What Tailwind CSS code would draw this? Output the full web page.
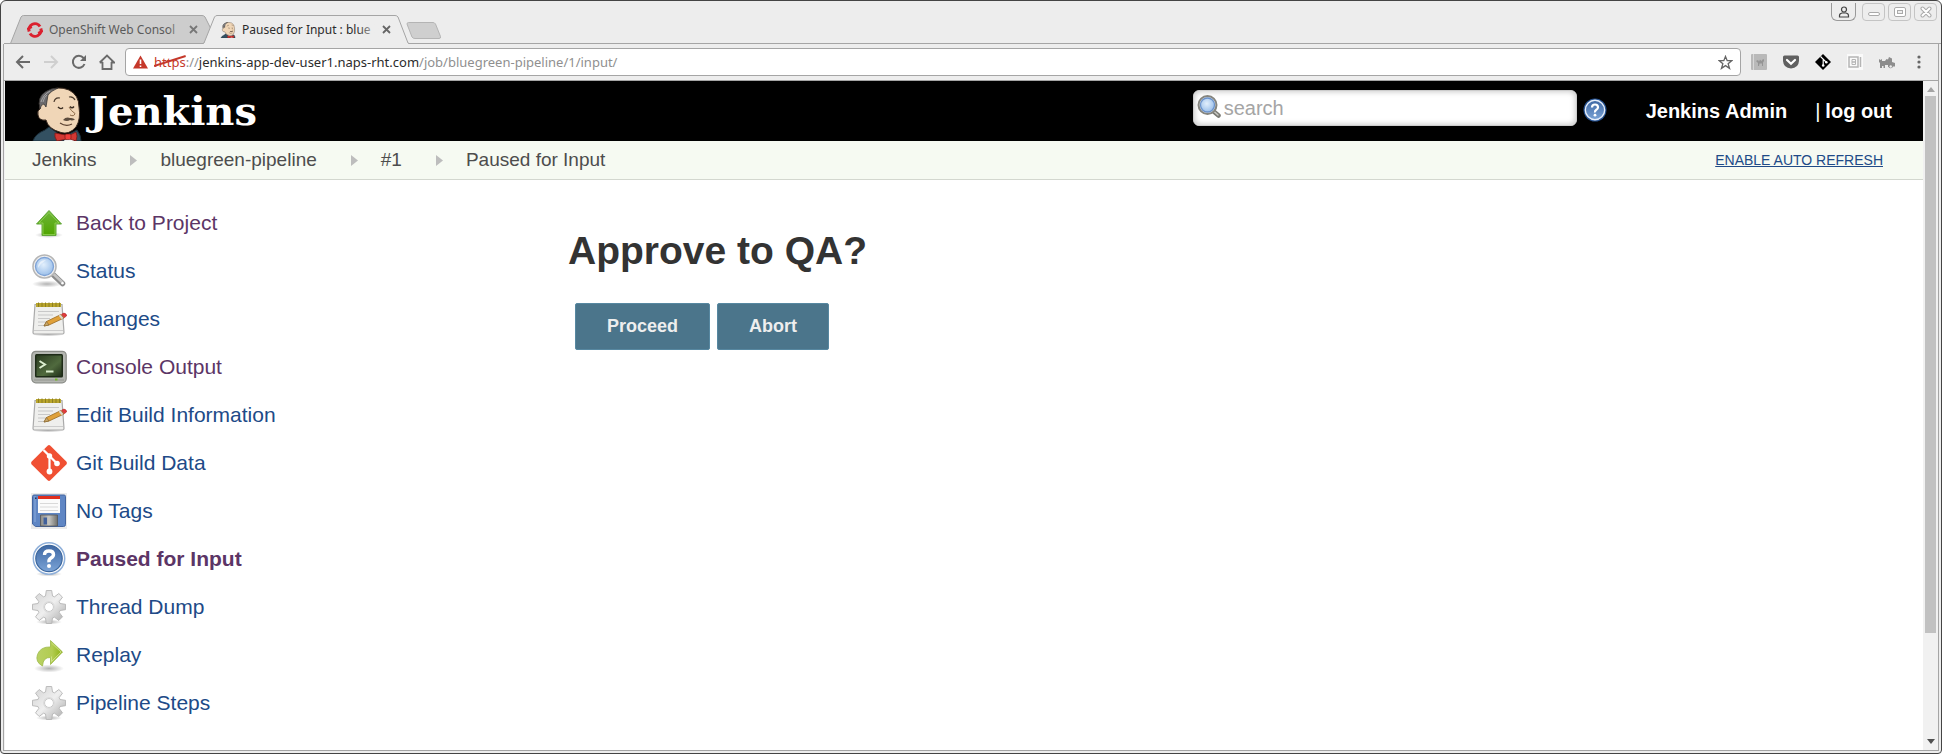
<!DOCTYPE html>
<html lang="en">
<head>
<meta charset="utf-8">
<title>Paused for Input : bluegreen-pipeline</title>
<script src="https://cdn.jsdelivr.net/npm/@tailwindcss/browser@4"></script>
</head>
<body class="flex h-screen flex-col overflow-hidden bg-white">
<svg class="absolute h-0 w-0" aria-hidden="true">
  <defs>
    <linearGradient id="green" x1="0" y1="0" x2="0" y2="1"><stop offset="0" stop-color="#6fb53a"/><stop offset="1" stop-color="#4fa500"/></linearGradient>
    <radialGradient id="glass" cx=".45" cy=".4" r=".6"><stop offset="0" stop-color="#e2effc"/><stop offset="1" stop-color="#9cc0ea"/></radialGradient>
    <linearGradient id="gear-fill" x1="0" y1="0" x2="1" y2="1"><stop offset="0" stop-color="#d2d2d2"/><stop offset=".5" stop-color="#efefef"/><stop offset="1" stop-color="#a8a8a8"/></linearGradient>
    <linearGradient id="screen" x1="0" y1="0" x2="1" y2="1"><stop offset="0" stop-color="#2a3b20"/><stop offset=".6" stop-color="#506a3e"/><stop offset="1" stop-color="#22311a"/></linearGradient>
    <linearGradient id="blue" x1="0" y1="0" x2="0" y2="1"><stop offset="0" stop-color="#3e68a4"/><stop offset="1" stop-color="#7ba3d6"/></linearGradient>
    <linearGradient id="metal" x1="0" y1="0" x2="1" y2="0"><stop offset="0" stop-color="#8b8b87"/><stop offset=".5" stop-color="#c6c6c2"/><stop offset="1" stop-color="#6f6f6b"/></linearGradient>
    <linearGradient id="lime" x1="0" y1="0" x2="1" y2="0"><stop offset="0" stop-color="#b9d164"/><stop offset=".6" stop-color="#b2cc50"/><stop offset="1" stop-color="#8cb010"/></linearGradient>
    <radialGradient id="shade"><stop offset="0" stop-color="#000" stop-opacity=".3"/><stop offset="1" stop-color="#000" stop-opacity="0"/></radialGradient>
  </defs>
  <symbol id="i-up" viewBox="0 0 36 36">
    <ellipse cx="18" cy="30" rx="14" ry="3" fill="url(#shade)"/>
    <path d="M18 5.500L30.500 19H25V30.500H11V19H5.500Z" fill="url(#green)" stroke="#62a63a"/>
    <path d="M18 7.500L28 18H24V29.500H12V18H8Z" fill="none" stroke="#a6e070" stroke-opacity=".6"/>
  </symbol>
  <symbol id="i-search" viewBox="0 0 36 36">
    <ellipse cx="16" cy="31" rx="15" ry="3.500" fill="url(#shade)"/>
    <path d="M22 21.500L31.500 30.500" stroke="#8c8c8c" stroke-width="5.500" stroke-linecap="round"/>
    <path d="M23 21.500L31.500 29.500" stroke="#c4c4c4" stroke-width="2.500" stroke-linecap="round"/>
    <circle cx="31.500" cy="30.300" r="1.200" fill="#fff"/>
    <circle cx="13.500" cy="13.500" r="11.500" fill="#eee" stroke="#b5b5b5" stroke-width="1.500"/>
    <circle cx="13.500" cy="13.500" r="9" fill="url(#glass)" stroke="#7da2d6" stroke-width="1.300"/>
    <path d="M7 15Q7 7 15 7Q10 10 7 15Z" fill="#fff" fill-opacity=".55"/>
  </symbol>
  <symbol id="i-search-dark" viewBox="0 0 24 24">
    <path d="M15.500 15.500L21.500 20.500" stroke="#7a7a74" stroke-width="4.500" stroke-linecap="round"/>
    <path d="M16 15.500L21 20" stroke="#c9c9c4" stroke-width="1.500" stroke-linecap="round"/>
    <circle cx="10.500" cy="10" r="9" fill="#ddd" stroke="#85857f" stroke-width="2"/>
    <circle cx="10.500" cy="10" r="7" fill="url(#glass)" stroke="#6b93cc" stroke-width="1.300"/>
  </symbol>
  <symbol id="i-notepad" viewBox="0 0 36 36">
    <ellipse cx="17" cy="33.500" rx="16" ry="2" fill="url(#shade)"/>
    <path d="M4 3.500H31L33 31.500Q33 33 31.500 33H3.500Q2 33 2 31.500Z" fill="#efefed" stroke="#aaa" stroke-width="1.200"/>
    <path d="M3 29.500H32" stroke="#ccc"/>
    <path d="M5 2H30V6H5Z" fill="#b9a52c"/>
    <path d="M7.500 1.500V6M11 1.500V6M14.500 1.500V6M18 1.500V6M21.500 1.500V6M25 1.500V6M28.500 1.500V6" stroke="#8d7f22" stroke-width="1"/>
    <path d="M7 10.500H28M7 14H22M7 17.500H19M7 21H15M7 24.500H14" stroke="#c8c8c8" stroke-width="1.200"/>
    <path d="M13 25L15.500 20.500L30 13.500L33 17L18 24Z" fill="#e0a13a" stroke="#9a6b22" stroke-width=".8"/>
    <path d="M13 25L15.500 20.500L18 24Z" fill="#c9a76a" stroke="#775a2a" stroke-width=".5"/>
    <path d="M28.500 14.200L31.500 17.700" stroke="#d8d8d8" stroke-width="2"/>
    <path d="M30.500 13.300Q33 11 35 13T33.300 16.700Z" fill="#e23b3b" stroke="#a93030" stroke-width=".5"/>
  </symbol>
  <symbol id="i-console" viewBox="0 0 36 36">
    <rect x=".8" y="2.300" width="34.400" height="31.500" rx="4" fill="#b4b6b1" stroke="#8b8d88" stroke-width="1.200"/>
    <rect x="4" y="5" width="28" height="23.500" rx="1.500" fill="#1d2a17"/>
    <rect x="5.500" y="6.500" width="25" height="20.500" fill="url(#screen)"/>
    <path d="M8.500 12L14 15.500L8.500 19" fill="none" stroke="#dcefd0" stroke-width="2"/>
    <path d="M15 22.500H22.500" stroke="#dcefd0" stroke-width="2"/>
    <path d="M3 31H33" stroke="#93958f" stroke-width="1"/>
    <path d="M24 30.500H26.500" stroke="#76b82a" stroke-width="2"/>
  </symbol>
  <symbol id="i-git" viewBox="0 0 36 36">
    <path d="M16.600.7Q18 -.5 19.400.7L35.300 16.600Q36.500 18 35.300 19.400L19.400 35.300Q18 36.500 16.600 35.300L.7 19.400Q-.5 18 .7 16.600Z" fill="#f05033"/>
    <path d="M12.500 5L18.500 11V26M19 11.500L26 18.500" fill="none" stroke="#fff" stroke-width="2.200"/>
    <circle cx="18.500" cy="11" r="2.700" fill="#fff"/><circle cx="26" cy="18.500" r="2.800" fill="#fff"/><circle cx="18.500" cy="26.500" r="2.900" fill="#fff"/>
  </symbol>
  <symbol id="i-floppy" viewBox="0 0 36 36">
    <path d="M0 0H36V36H0Z" fill="#ebebeb"/>
    <path d="M3 2H33Q34.500 2 34.500 3.500V31.500Q34.500 33.500 32.500 33.500H4.500L1.500 31V3.500Q1.500 2 3 2Z" fill="#5f86c4" stroke="#4365a0"/>
    <path d="M4 3V29" stroke="#8dacdc"/>
    <path d="M7 3.500H29V20H7Z" fill="#fbfbfb"/><path d="M7 3H29V6H7Z" fill="#e03020"/>
    <path d="M9 10.500H27M9 14H27M9 17.500H27" stroke="#d9d9d9"/>
    <path d="M9.500 22H26.500V33H9.500Z" fill="url(#metal)" stroke="#555" stroke-width=".8"/>
    <path d="M12.500 24.500H16V31.500H12.500Z" fill="#41609b"/>
    <path d="M4 4.500H5.500V6H4Z" fill="#22355a"/>
  </symbol>
  <symbol id="i-help" viewBox="0 0 36 36">
    <ellipse cx="18" cy="33" rx="13" ry="2.500" fill="url(#shade)"/>
    <circle cx="18" cy="17.500" r="15.700" fill="#fff" stroke="#8fb0da" stroke-width="1.500"/>
    <circle cx="18" cy="17.500" r="13.200" fill="url(#blue)" stroke="#3d689f" stroke-width="1.200"/>
    <path d="M13.500 14Q13.500 10 18 10T22.500 13.500Q22.500 15.500 20 17T18 21.300" fill="none" stroke="#fff" stroke-width="3.400"/>
    <circle cx="18" cy="25" r="2" fill="#fff"/>
  </symbol>
  <symbol id="i-help-dark" viewBox="0 0 24 24">
    <circle cx="12" cy="12" r="11.500" fill="#24508f"/>
    <circle cx="12" cy="12" r="9.700" fill="url(#blue)" stroke="#e6eefa" stroke-width="1.400"/>
    <path d="M9 9.500Q9 6.500 12 6.500T15 9.200Q15 10.800 13.300 11.800T12 14.500" fill="none" stroke="#fff" stroke-width="2.200"/>
    <circle cx="12" cy="17.200" r="1.400" fill="#fff"/>
  </symbol>
  <symbol id="i-gear" viewBox="0 0 36 36">
    <ellipse cx="18" cy="33" rx="13" ry="2.500" fill="url(#shade)"/>
    <g fill="url(#gear-fill)" stroke="#b5b5b5" stroke-width=".9" stroke-linejoin="round">
      <path fill-rule="evenodd" d="M14.500 7L15.300 1.500H20.700L21.500 7L23.500 7.800L27.800 4.500L31.500 8.200L28.200 12.500L29 14.500L34.500 15.300V20.700L29 21.500L28.200 23.500L31.500 27.800L27.800 31.500L23.500 28.200L21.500 29L20.700 34.500H15.300L14.500 29L12.500 28.200L8.200 31.500L4.500 27.800L7.800 23.500L7 21.500L1.500 20.700V15.300L7 14.500L7.800 12.500L4.500 8.200L8.200 4.500L12.500 7.800ZM18 13.500A4.500 4.500 0 1 0 18 22.500A4.500 4.500 0 1 0 18 13.500Z"/>
    </g>
    <circle cx="18" cy="18" r="5.200" fill="none" stroke="#dcdcdc" stroke-width="1.500"/>
  </symbol>
  <symbol id="i-replay" viewBox="0 0 36 36">
    <ellipse cx="18" cy="31.500" rx="15" ry="4" fill="url(#shade)"/>
    <path d="M19.500 3.500L31.500 15L19.500 27.500V20.500Q12 20 11.500 29Q4 25 6.500 17.500Q9.500 9.500 19.500 10Z" fill="url(#lime)" stroke="#a3bd52" stroke-width=".9"/>
    <path d="M20.500 6L30 15L20.500 24.500V19.500" fill="none" stroke="#d9e99a" stroke-opacity=".7"/>
  </symbol>
  <symbol id="i-butler" viewBox="0 0 48 54">
    <path d="M0 54Q2 47 12 43L16 40L30 50L44 43Q48 48 48 54Z" fill="#335061" stroke="#1b2e3a"/>
    <path d="M13 33Q6 34 5 28Q4 23 7 22Q4 10 13 5Q24 -2 36 3Q46 8 46 20Q48 32 43 40Q36 48 28 45.500Q15 42 13 33Z" fill="#f0d6b7" stroke="#3a2a20" stroke-width="1"/>
    <path d="M7 22Q4 10 12 5Q18 1 25 1Q18 4 15 8Q14 14 13 20L11 17Q8 17 7 22Z" fill="#6b6a6c" stroke="#2a2a2a" stroke-width=".7"/>
    <path d="M8 15Q10 8 17 4M10 15Q11 10 14 8" fill="none" stroke="#b3b2b4" stroke-width=".8"/>
    <path d="M21 15Q22 10 27 11M36 10Q40 9 42 13" fill="none" stroke="#4b3b2d" stroke-width="1.200"/>
    <path d="M25 20Q28 23 30 20.500M37 19.500Q39 22 41 19.500" fill="none" stroke="#3a2d22" stroke-width="1.400"/>
    <path d="M36 20Q38 24 42 26.500Q41 30 37 28" fill="none" stroke="#8d6a48" stroke-width="1"/>
    <path d="M30 33Q33 29.500 37 31Q40 30.500 42 32.500Q39 34 37 33Q34 35 30 33Z" fill="#5c4c3e"/>
    <path d="M27 36Q33 40 39 37" fill="none" stroke="#5a4030" stroke-width="1.200"/>
    <path d="M31 54L33 50H40L41 54Z" fill="#eee"/>
    <path d="M22 46L33 48L34 52L24 54Q21 50 22 46ZM43 45L37 48L37 52L43 54Q45 49 43 45Z" fill="#d33833" stroke="#7c1816" stroke-width=".8"/>
    <rect x="32" y="47" width="6" height="5.500" rx="1.500" fill="#ef3d3a" stroke="#7c1816" stroke-width=".7"/>
  </symbol>
  <symbol id="i-arrow" viewBox="0 0 7 11"><path d="M0 0L7 5.500L0 11Z" fill="#bdbdbd"/></symbol>
  <symbol id="i-x" viewBox="0 0 9 9"><path d="M1 1L8 8M8 1L1 8" stroke="currentColor" stroke-width="1.800"/></symbol>
</svg>

<div class="flex min-h-0 flex-1 flex-col rounded-t-md rounded-b-sm border border-[#444] bg-[#ededed] font-['Noto_Sans',sans-serif]">
  <!-- Tab strip -->
  <div class="flex h-[43px] shrink-0 justify-between">
    <div class="relative flex items-end pl-[9px]" role="tablist">
      <div class="absolute inset-x-0 bottom-0 ml-[3px] border-b border-[#a5a5a5]"></div>
      <div role="tab" aria-selected="false" class="relative flex h-[29px] w-[202px] items-center pr-[12px] pl-[17px] text-[#5b5b5b]">
        <svg class="absolute inset-0 h-full w-full" viewBox="0 0 202 29" fill="#cdcdcd" stroke="#a5a5a5"><path d="M.5 28.500L11 2Q12 .5 13.500 .5H192Q194 .5 195 2L201 14L194 28.500Z"/></svg>
        <svg class="relative mr-[6px] h-4 w-4" viewBox="0 0 16 16" fill="none" stroke="#db212f" stroke-width="3"><path d="M2.200 9.500A6 6 0 0 1 13 4.500M13.800 6.500A6 6 0 0 1 3 11.500"/><path d="M0 7L5 5M11 11L16 9" stroke-width="2"/></svg>
        <span class="relative w-[132px] text-[12px] whitespace-nowrap">OpenShift Web Consol</span>
        <div class="absolute right-[24px] h-4 w-5 bg-linear-to-r from-[#cdcdcd]/0 to-[#cdcdcd]"></div>
        <button aria-label="Close tab" class="absolute right-[14px] text-[#777]"><svg class="h-[9px] w-[9px]"><use href="#i-x"/></svg></button>
      </div>
      <div role="tab" aria-selected="true" class="relative -ml-[9px] flex h-[29px] w-[206px] items-center pl-[17px] text-[#2b2b2b]">
        <svg class="absolute inset-0 h-full w-full" viewBox="0 0 206 29"><path d="M0 29L1 28L11.500 2Q12.500 .5 14 .5H192Q194 .5 195 2L205 28L206 29Z" fill="#ededed"/><path d="M0 28.500L1 28L11.500 2Q12.500 .5 14 .5H192Q194 .5 195 2L205 28L206 28.500" fill="none" stroke="#a5a5a5"/></svg>
        <svg class="relative mr-[6px] h-4 w-4"><use href="#i-butler"/></svg>
        <span class="relative w-[134px] text-[12px] whitespace-nowrap">Paused for Input : blue</span>
        <div class="absolute right-[28px] h-4 w-6 bg-linear-to-r from-[#ededed]/0 to-[#ededed]"></div>
        <button aria-label="Close tab" class="absolute right-[18px] text-[#666]"><svg class="h-[9px] w-[9px]"><use href="#i-x"/></svg></button>
      </div>
      <button aria-label="New tab" class="mb-[5px] -ml-[3px] h-[17px] w-[36px]"><svg class="h-[17px] w-[36px]" viewBox="0 0 36 17"><path d="M2.500 .5H27Q28.500 .5 29.500 2L34.500 14.500Q35 16.500 33 16.500H9Q7 16.500 6 15L1 2Q1 .5 2.500 .5Z" fill="#cfcfcf" stroke="#b4b4b4"/></svg></button>
    </div>
    <div class="flex flex-1 items-start justify-end gap-[3px] border-b border-[#a5a5a5] pt-[2px] pr-[4px]">
      <button aria-label="Profile" class="mr-[3px] flex h-[18px] w-[25px] items-center justify-center rounded-b-md border border-t-0 border-[#999]"><svg class="h-3 w-3" viewBox="0 0 12 12" fill="none" stroke="#444" stroke-width="1.200"><circle cx="6" cy="3.500" r="2.500"/><path d="M1.500 11V9.500Q1.500 7.500 4 7H8Q10.500 7.500 10.500 9.500V11Z"/></svg></button>
      <button aria-label="Minimize" class="flex h-[18px] w-[23px] items-center justify-center rounded-sm border border-[#c4c4c4]"><svg class="h-3 w-3" viewBox="0 0 12 12"><rect x=".5" y="6.500" width="11" height="3" rx="1.500" fill="#fff" stroke="#aaa"/></svg></button>
      <button aria-label="Maximize" class="flex h-[18px] w-[23px] items-center justify-center rounded-sm border border-[#c4c4c4]"><svg class="h-3 w-3" viewBox="0 0 12 12" fill="#fff" stroke="#aaa"><rect x=".5" y="1.500" width="11" height="9" rx="1.500"/><rect x="3.500" y="4.500" width="5" height="3" fill="#ededed"/></svg></button>
      <button aria-label="Close" class="flex h-[18px] w-[23px] items-center justify-center rounded-sm border border-[#c4c4c4]"><svg class="h-3 w-3" viewBox="0 0 12 12" stroke-linecap="round"><path d="M2.500 2.500L9.500 9.500M9.500 2.500L2.500 9.500" stroke="#aaa" stroke-width="4"/><path d="M2.500 2.500L9.500 9.500M9.500 2.500L2.500 9.500" stroke="#fff" stroke-width="2"/></svg></button>
    </div>
  </div>

  <!-- Toolbar -->
  <div class="mx-[2px] flex h-[37px] shrink-0 items-center border-x border-b border-[#a5a5a5] px-[11px]">
    <div class="flex items-center gap-[12px] text-[#6a6a6a]">
      <button aria-label="Back"><svg class="h-4 w-4" viewBox="0 0 16 16" fill="none" stroke="currentColor" stroke-width="2"><path d="M15 8H2.500M8 2L2 8L8 14"/></svg></button>
      <button aria-label="Forward" class="text-[#cfcfcf]"><svg class="h-4 w-4" viewBox="0 0 16 16" fill="none" stroke="currentColor" stroke-width="2"><path d="M1 8H13.500M8 2L14 8L8 14"/></svg></button>
      <button aria-label="Reload"><svg class="h-4 w-4" viewBox="0 0 16 16" fill="none" stroke="currentColor" stroke-width="2"><path d="M13.500 10A6 6 0 1 1 12.500 4L14 5.500"/><path d="M15 1V7H9Z" fill="currentColor" stroke="none"/></svg></button>
      <button aria-label="Home"><svg class="h-4 w-4" viewBox="0 0 16 16" fill="none" stroke="currentColor" stroke-width="1.800"><path d="M3.500 8V15H12.500V8M.8 8.500L8 1.500L15.200 8.500H12"/><path d="M.8 8.500H4"/></svg></button>
    </div>
    <div class="ml-[10px] flex h-[28px] flex-1 items-center rounded-sm border border-[#a5a5a5] bg-white px-[7px]">
      <svg class="mr-[6px] h-[14px] w-[15px]" viewBox="0 0 15 14"><path d="M7.500 .5L15 13.500H0Z" fill="#c5382a"/><path d="M7.500 4.500V9M7.500 10.500V12" stroke="#fff" stroke-width="1.600"/></svg>
      <div role="textbox" aria-label="Address" contenteditable="true" spellcheck="false" class="flex-1 text-[13px] leading-5 whitespace-nowrap text-[#8f8f8f]"><span class="relative text-[#c5382a]">https<svg class="absolute top-0 left-0 h-full w-full" viewBox="0 0 32 18" preserveAspectRatio="none"><path d="M0 13L32 3" stroke="#c5382a" stroke-width="2"/></svg></span>://<span class="text-[#2b2b2b]">jenkins-app-dev-user1.naps-rht.com</span>/job/bluegreen-pipeline/1/input/</div>
      <button aria-label="Bookmark"><svg class="h-[15px] w-[15px]" viewBox="0 0 16 16" fill="none" stroke="#666" stroke-width="1.400"><path d="M8 1.500L9.800 6H14.800L10.800 9.200L12.300 14.200L8 11.300L3.700 14.200L5.200 9.200L1.200 6H6.200Z"/></svg></button>
    </div>
    <div class="ml-[10px] flex items-center gap-4">
      <button aria-label="Camel extension"><svg class="h-4 w-4" viewBox="0 0 16 16"><rect width="16" height="16" rx="1" fill="#b9b9b9"/><path d="M2.500 0V16" stroke="#d8d8d8"/><path d="M5 7L7 6L8 7.500L9 5.500L10.500 7L12 5L13 5.500V7L12 8.500V12H11V9.500H8.500L8 12H7V9Z" fill="#959595"/></svg></button>
      <button aria-label="Pocket"><svg class="h-4 w-4" viewBox="0 0 16 16"><path d="M1.500 1.500H14.500Q16 1.500 16 3V7Q15.500 14 8 14.500Q.5 14 0 7V3Q0 1.500 1.500 1.500Z" fill="#606060"/><path d="M4 6L8 9.800L12 6" fill="none" stroke="#fff" stroke-width="2.200" stroke-linecap="round"/></svg></button>
      <button aria-label="Git extension"><svg class="h-4 w-4" viewBox="0 0 16 16"><path d="M8 0L16 8L8 16L0 8Z" fill="#000"/><path d="M5.500 2.500L8.200 5.200V12M8.200 5.200L11.500 8.500" fill="none" stroke="#fff" stroke-width="1.200"/><circle cx="8.200" cy="11.500" r="1.300" fill="#fff"/><circle cx="11.300" cy="8.300" r="1.300" fill="#fff"/></svg></button>
      <button aria-label="Blocker extension"><svg class="h-4 w-4" viewBox="0 0 16 16" fill="none" stroke="#b5b5b5"><path d="M0 0H16V16H0Z" fill="#fafafa" stroke="none"/><rect x="2" y="3" width="9" height="10" stroke-width="1.500"/><path d="M5 5.500H8.500V8H5ZM5 8H8.500V10.500H5Z"/><path d="M13.500 3V13" stroke-width="1.500"/></svg></button>
      <button aria-label="Tractor extension"><svg class="h-4 w-4" viewBox="0 0 16 16" fill="#8d8d8d"><path d="M0 5L1.500 6L3 5V7H6L7.500 5L9 5.500L10 3L13 4.500V8L16 9V12.500H14A2.500 2.500 0 0 1 9.500 13H9V11H6V14H4.500V12H3V14H1V9L0 8Z"/><circle cx="11.700" cy="12.500" r="1.200" fill="#ededed"/></svg></button>
      <button aria-label="Menu"><svg class="h-4 w-4" viewBox="0 0 16 16" fill="#666"><circle cx="8" cy="3" r="1.600"/><circle cx="8" cy="8" r="1.600"/><circle cx="8" cy="13" r="1.600"/></svg></button>
    </div>
  </div>

  <!-- Page viewport -->
  <div class="mx-[2px] mb-[2px] flex min-h-0 flex-1 border-x border-b border-[#a5a5a5] bg-[#f1f1f1] pl-px font-['Liberation_Sans',Arial,sans-serif]">
    <div class="min-w-0 flex-1 overflow-hidden bg-white">
      <header class="flex h-[60px] items-center justify-between bg-black pr-[31px] pl-[27px] text-[20px] font-bold text-white">
        <a href="#" class="flex h-full items-end">
          <svg class="h-[54px] w-[50px]" preserveAspectRatio="none"><use href="#i-butler"/></svg>
          <span class="ml-[7px] pb-[6px] font-['DejaVu_Serif',serif] text-[40px] leading-[48px]">Jenkins</span>
        </a>
        <div class="flex items-center">
          <div class="relative mb-[6px]">
            <input type="text" aria-label="Search" placeholder="search" class="block h-[36px] w-[384px] rounded-md border border-[#ccc] bg-white pl-[30px] text-[20px] font-normal text-black shadow-[inset_0_0_6px_#bbb] placeholder:text-[#a5a5a5]">
            <svg class="absolute top-[5px] left-[4px] h-6 w-6"><use href="#i-search-dark"/></svg>
          </div>
          <a href="#" aria-label="Help" class="mb-[2px] ml-[6px]"><svg class="h-6 w-6"><use href="#i-help-dark"/></svg></a>
          <a href="#" class="ml-[39px]">Jenkins Admin</a>
          <span class="ml-[28px] font-normal">|</span>
          <a href="#" class="ml-[5px]">log out</a>
        </div>
      </header>
      <nav class="flex h-[39px] items-center border-b border-[#d3d7cf] bg-[#f6faf2] pr-[40px] pl-[27px] text-[19px] text-[#4d4d4d]">
        <a href="#">Jenkins</a>
        <svg class="mr-[23px] ml-[34px] h-[11px] w-[7px]"><use href="#i-arrow"/></svg>
        <a href="#">bluegreen-pipeline</a>
        <svg class="mr-[23px] ml-[34px] h-[11px] w-[7px]"><use href="#i-arrow"/></svg>
        <a href="#">#1</a>
        <svg class="mr-[23px] ml-[34px] h-[11px] w-[7px]"><use href="#i-arrow"/></svg>
        <a href="#">Paused for Input</a>
        <a href="#" class="ml-auto text-[14px] text-[#204a87] underline">ENABLE AUTO REFRESH</a>
      </nav>
      <div class="flex pt-[19px] pl-[26px]">
        <aside class="w-[537px] shrink-0 text-[21px] text-[#204a87]">
          <a href="#" class="flex h-12 items-center gap-[9px] text-[#5c3566]"><svg class="h-9 w-9"><use href="#i-up"/></svg>Back to Project</a>
          <a href="#" class="flex h-12 items-center gap-[9px]"><svg class="h-9 w-9"><use href="#i-search"/></svg>Status</a>
          <a href="#" class="flex h-12 items-center gap-[9px]"><svg class="h-9 w-9"><use href="#i-notepad"/></svg>Changes</a>
          <a href="#" class="flex h-12 items-center gap-[9px] text-[#5c3566]"><svg class="h-9 w-9"><use href="#i-console"/></svg>Console Output</a>
          <a href="#" class="flex h-12 items-center gap-[9px]"><svg class="h-9 w-9"><use href="#i-notepad"/></svg>Edit Build Information</a>
          <a href="#" class="flex h-12 items-center gap-[9px]"><svg class="h-9 w-9"><use href="#i-git"/></svg>Git Build Data</a>
          <a href="#" class="flex h-12 items-center gap-[9px]"><svg class="h-9 w-9"><use href="#i-floppy"/></svg>No Tags</a>
          <a href="#" class="flex h-12 items-center gap-[9px] font-bold text-[#5c3566]"><svg class="h-9 w-9"><use href="#i-help"/></svg>Paused for Input</a>
          <a href="#" class="flex h-12 items-center gap-[9px]"><svg class="h-9 w-9"><use href="#i-gear"/></svg>Thread Dump</a>
          <a href="#" class="flex h-12 items-center gap-[9px]"><svg class="h-9 w-9"><use href="#i-replay"/></svg>Replay</a>
          <a href="#" class="flex h-12 items-center gap-[9px]"><svg class="h-9 w-9"><use href="#i-gear"/></svg>Pipeline Steps</a>
        </aside>
        <main class="pt-[28px]">
          <h1 class="text-[39px] leading-[48px] font-bold text-[#333]">Approve to QA?</h1>
          <form class="mt-[28px] ml-[7px] flex gap-[7px]">
            <button type="button" class="h-[47px] rounded-xs border border-[#5788a1] bg-[#4b758b] px-[31px] text-[18px] font-bold text-[#eee]">Proceed</button>
            <button type="button" class="h-[47px] rounded-xs border border-[#5788a1] bg-[#4b758b] px-[31px] text-[18px] font-bold text-[#eee]">Abort</button>
          </form>
        </main>
      </div>
    </div>
    <!-- Scrollbar -->
    <div class="flex w-[15px] shrink-0 flex-col items-center pt-[6px] pb-[6px]">
      <svg class="h-[5px] w-[8px] shrink-0" viewBox="0 0 8 5"><path d="M4 0L8 5H0Z" fill="#a3a3a3"/></svg>
      <div class="mt-[4px] min-h-0 w-[11px] flex-[537] bg-[#c1c1c1]"></div>
      <div class="flex-[106]"></div>
      <svg class="h-[5px] w-[8px] shrink-0" viewBox="0 0 8 5"><path d="M0 0H8L4 5Z" fill="#505050"/></svg>
    </div>
  </div>
</div>
</body>
</html>
